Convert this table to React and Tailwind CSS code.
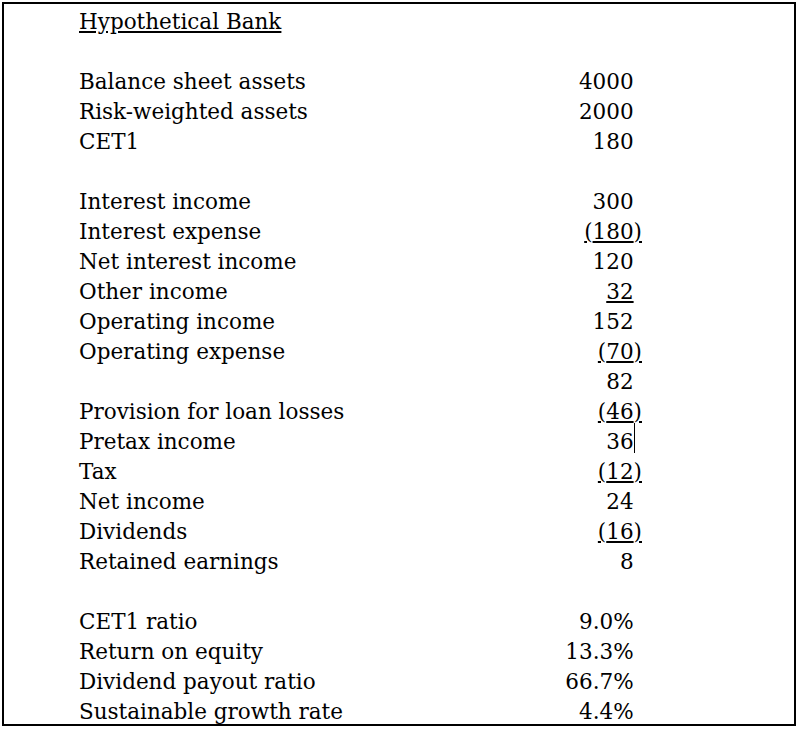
import React from "react";

// rows of the worked example; null = blank spacer line
const rows = [
  ["Balance sheet assets", "4000"],
  ["Risk-weighted assets", "2000"],
  ["CET1", "180"],
  null,
  ["Interest income", "300"],
  ["Interest expense", "180", { neg: true, line: true }],
  ["Net interest income", "120"],
  ["Other income", "32", { line: true }],
  ["Operating income", "152"],
  ["Operating expense", "70", { neg: true, line: true }],
  ["", "82"],
  ["Provision for loan losses", "46", { neg: true, line: true }],
  ["Pretax income", "36", { cursor: true }],
  ["Tax", "12", { neg: true, line: true }],
  ["Net income", "24"],
  ["Dividends", "16", { neg: true, line: true }],
  ["Retained earnings", "8"],
  null,
  ["CET1 ratio", "9.0%"],
  ["Return on equity", "13.3%"],
  ["Dividend payout ratio", "66.7%"],
  ["Sustainable growth rate", "4.4%"],
];

const Value = ({ value, opts = {} }) => {
  const { neg, line, cursor } = opts;

  if (neg) {
    return <span className={line ? "underline" : ""}>({value})</span>;
  }

  return (
    <>
      <span className={line ? "underline" : ""}>{value}</span>
      {cursor ? (
        <span className="relative inline-block">
          <span className="invisible">)</span>
          <span className="absolute left-0 -top-[4px] h-[30px] w-px bg-black" />
        </span>
      ) : (
        <span className="invisible">)</span>
      )}
    </>
  );
};

const App = () => {
  return (
    <div className="w-[800px] h-[732px] bg-white p-[2px]">
      <div className="h-[724px] w-[794px] border-2 border-black pt-[3px] pl-[75px] font-['DejaVu_Serif',serif] text-[21.5px] leading-[30px] text-black">
        <div className="h-[30px]">
          <span className="underline">Hypothetical Bank</span>
        </div>
        <div className="h-[30px]" />

        {rows.map((row, i) =>
          row ? (
            <div key={i} className="flex h-[30px]">
              <div className="w-[420px]">{row[0]}</div>
              <div className="w-[143px] text-right">
                <Value value={row[1]} opts={row[2]} />
              </div>
            </div>
          ) : (
            <div key={i} className="h-[30px]" />
          )
        )}
      </div>
    </div>
  );
};

export default App;
